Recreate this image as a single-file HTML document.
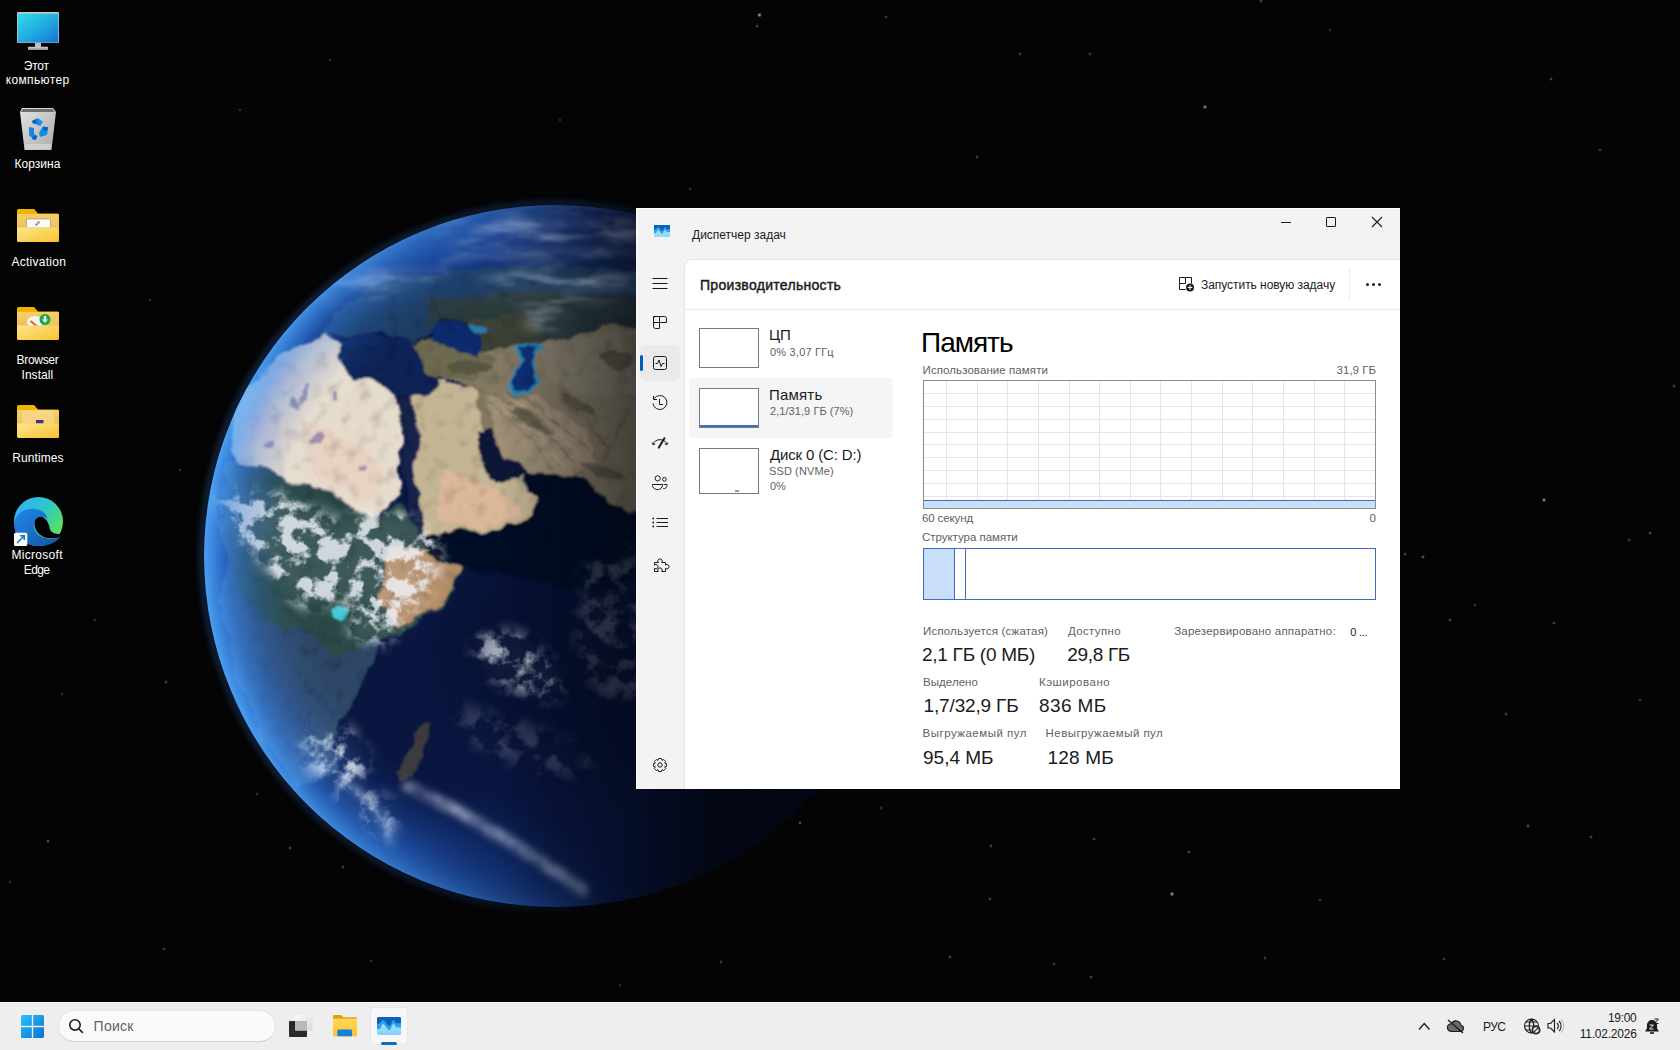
<!DOCTYPE html>
<html><head><meta charset="utf-8">
<style>
*{box-sizing:border-box;margin:0;padding:0}
html,body{width:1680px;height:1050px;overflow:hidden;background:#040404;font-family:"Liberation Sans",sans-serif;position:relative}
.b{position:absolute}
.tx{position:absolute;white-space:nowrap;line-height:1;z-index:5}

</style></head><body>
<svg class="b" style="left:0;top:0" width="1680" height="1050" viewBox="0 0 1680 1050"><defs><radialGradient id="st"><stop offset="0" stop-color="#fff"/><stop offset="0.35" stop-color="#fff" stop-opacity="0.6"/><stop offset="1" stop-color="#fff" stop-opacity="0"/></radialGradient></defs><g fill="url(#st)">
<circle cx="759.5" cy="15" r="2.4" opacity="0.75"/>
<circle cx="757" cy="26" r="2.0" opacity="0.38"/>
<circle cx="1205" cy="107" r="2.3" opacity="0.68"/>
<circle cx="1551" cy="79" r="2.0" opacity="0.38"/>
<circle cx="1020" cy="54" r="2.0" opacity="0.34"/>
<circle cx="1090" cy="54" r="2.0" opacity="0.34"/>
<circle cx="977" cy="157" r="2.0" opacity="0.34"/>
<circle cx="690" cy="189" r="1.9" opacity="0.30"/>
<circle cx="886" cy="17" r="2.0" opacity="0.34"/>
<circle cx="1261" cy="1" r="2.0" opacity="0.38"/>
<circle cx="1172" cy="894" r="2.4" opacity="0.75"/>
<circle cx="1528" cy="826" r="2.1" opacity="0.45"/>
<circle cx="1591" cy="837" r="2.0" opacity="0.41"/>
<circle cx="991" cy="846" r="2.0" opacity="0.38"/>
<circle cx="1094" cy="839" r="2.0" opacity="0.38"/>
<circle cx="1189" cy="852" r="2.0" opacity="0.41"/>
<circle cx="990" cy="899" r="2.0" opacity="0.38"/>
<circle cx="950" cy="957" r="2.0" opacity="0.38"/>
<circle cx="1091" cy="977" r="2.0" opacity="0.41"/>
<circle cx="1054" cy="964" r="2.0" opacity="0.34"/>
<circle cx="1444" cy="959" r="2.0" opacity="0.34"/>
<circle cx="881" cy="808" r="1.9" opacity="0.30"/>
<circle cx="1544" cy="500" r="2.3" opacity="0.68"/>
<circle cx="1423" cy="557" r="2.1" opacity="0.45"/>
<circle cx="1405" cy="554" r="2.0" opacity="0.38"/>
<circle cx="1450" cy="620" r="2.0" opacity="0.41"/>
<circle cx="1554" cy="623" r="2.0" opacity="0.38"/>
<circle cx="1674" cy="386" r="2.0" opacity="0.38"/>
<circle cx="1506" cy="714" r="2.0" opacity="0.38"/>
<circle cx="1629" cy="540" r="2.0" opacity="0.34"/>
<circle cx="48" cy="841" r="2.1" opacity="0.45"/>
<circle cx="166" cy="682" r="2.0" opacity="0.38"/>
<circle cx="290" cy="848" r="2.0" opacity="0.38"/>
<circle cx="343" cy="867" r="2.0" opacity="0.34"/>
<circle cx="164" cy="949" r="2.0" opacity="0.34"/>
<circle cx="721" cy="962" r="2.0" opacity="0.34"/>
<circle cx="371" cy="961" r="1.9" opacity="0.30"/>
<circle cx="10" cy="882" r="1.9" opacity="0.30"/>
<circle cx="62" cy="694" r="1.9" opacity="0.30"/>
<circle cx="257" cy="794" r="1.9" opacity="0.30"/>
<circle cx="800" cy="823" r="2.1" opacity="0.45"/>
<circle cx="1382" cy="787" r="2.0" opacity="0.38"/>
<circle cx="1650" cy="533" r="2.0" opacity="0.41"/>
<circle cx="1475" cy="605" r="1.9" opacity="0.30"/>
<circle cx="1265" cy="958" r="2.0" opacity="0.34"/>
<circle cx="150" cy="300" r="1.9" opacity="0.30"/>
<circle cx="240" cy="110" r="1.9" opacity="0.26"/>
<circle cx="330" cy="60" r="1.9" opacity="0.26"/>
<circle cx="560" cy="120" r="1.9" opacity="0.26"/>
<circle cx="95" cy="620" r="1.9" opacity="0.26"/>
<circle cx="180" cy="470" r="1.9" opacity="0.26"/>
<circle cx="1330" cy="30" r="1.9" opacity="0.30"/>
<circle cx="1600" cy="150" r="1.9" opacity="0.30"/>
<circle cx="1640" cy="700" r="1.9" opacity="0.30"/>
<circle cx="1320" cy="900" r="1.9" opacity="0.30"/>
<circle cx="620" cy="985" r="1.9" opacity="0.26"/>
</g></svg>
<svg class="b" style="left:0;top:0" width="1680" height="1050" viewBox="0 0 1680 1050">
<defs>
 <clipPath id="ec"><circle cx="555" cy="556" r="351"/></clipPath>
 <filter id="bl1" x="-20%" y="-20%" width="140%" height="140%"><feGaussianBlur stdDeviation="1.2"/></filter>
 <filter id="bl2" x="-20%" y="-20%" width="140%" height="140%"><feGaussianBlur stdDeviation="3"/></filter>
 <filter id="bl3" x="-30%" y="-30%" width="160%" height="160%"><feGaussianBlur stdDeviation="7"/></filter>
 <filter id="bl4" x="-50%" y="-50%" width="200%" height="200%"><feGaussianBlur stdDeviation="16"/></filter>
 <filter id="land" x="0" y="0" width="1680" height="1050" filterUnits="userSpaceOnUse">
  <feTurbulence type="fractalNoise" baseFrequency="0.022" numOctaves="3" seed="3" result="t"/>
  <feDisplacementMap in="SourceGraphic" in2="t" scale="20" xChannelSelector="R" yChannelSelector="G" result="d0"/>
  <feTurbulence type="fractalNoise" baseFrequency="0.09" numOctaves="2" seed="5" result="tt"/>
  <feDisplacementMap in="d0" in2="tt" scale="6" xChannelSelector="R" yChannelSelector="G" result="d"/>
  <feTurbulence type="fractalNoise" baseFrequency="0.07" numOctaves="4" seed="9" result="t2"/>
  <feColorMatrix in="t2" type="matrix" values="0.8 0 0 0 0.6  0.8 0 0 0 0.6  0.8 0 0 0 0.6  0 0 0 0 1" result="g"/>
  <feComposite in="d" in2="g" operator="arithmetic" k1="1" k2="0" k3="0" k4="0" result="m"/>
  <feGaussianBlur in="m" stdDeviation="0.9"/>
 </filter>
 <filter id="cloud" x="0" y="0" width="1680" height="1050" filterUnits="userSpaceOnUse">
  <feTurbulence type="fractalNoise" baseFrequency="0.05" numOctaves="4" seed="11" result="n"/>
  <feColorMatrix in="n" type="matrix" values="0 0 0 0 1  0 0 0 0 1  0 0 0 0 1  4.5 0 0 0 -2.05" result="c"/>
  <feGaussianBlur in="SourceGraphic" stdDeviation="8" result="m"/>
  <feComposite in="c" in2="m" operator="arithmetic" k1="1.5" k2="0" k3="0.12" k4="0" result="o"/>
  <feColorMatrix in="o" type="matrix" values="0 0 0 0 0.9  0 0 0 0 0.93  0 0 0 0 0.98  0 0 0 1 0"/>
 </filter>
 <filter id="haze" x="0" y="0" width="1680" height="1050" filterUnits="userSpaceOnUse">
  <feTurbulence type="fractalNoise" baseFrequency="0.018 0.07" numOctaves="4" seed="21" result="n"/>
  <feColorMatrix in="n" type="matrix" values="0 0 0 0 1  0 0 0 0 1  0 0 0 0 1  3.0 0 0 0 -1.3" result="c"/>
  <feGaussianBlur in="c" stdDeviation="1" result="cb"/>
  <feGaussianBlur in="SourceGraphic" stdDeviation="9" result="m"/>
  <feComposite in="cb" in2="m" operator="arithmetic" k1="1.3" k2="0" k3="0.18" k4="0" result="o"/>
  <feColorMatrix in="o" type="matrix" values="0 0 0 0 0.78  0 0 0 0 0.85  0 0 0 0 0.98  0 0 0 0.9 0"/>
 </filter>
 <filter id="streak" x="0" y="0" width="1680" height="1050" filterUnits="userSpaceOnUse">
  <feTurbulence type="fractalNoise" baseFrequency="0.025" numOctaves="3" seed="4" result="n"/>
  <feColorMatrix in="n" type="matrix" values="0 0 0 0 1  0 0 0 0 1  0 0 0 0 1  1.4 0 0 0 0" result="c"/>
  <feGaussianBlur in="SourceGraphic" stdDeviation="3.5" result="m"/>
  <feComposite in="c" in2="m" operator="arithmetic" k1="0.8" k2="0" k3="0" k4="0" result="o"/>
  <feColorMatrix in="o" type="matrix" values="0 0 0 0 0.78  0 0 0 0 0.84  0 0 0 0 0.96  0 0 0 0.75 0"/>
 </filter>
 <radialGradient id="rim" cx="555" cy="556" r="351" gradientUnits="userSpaceOnUse">
  <stop offset="0.80" stop-color="#1d4fb0" stop-opacity="0"/>
  <stop offset="0.90" stop-color="#1d4fb0" stop-opacity="0.3"/>
  <stop offset="0.96" stop-color="#1f56b8" stop-opacity="0.6"/>
  <stop offset="1" stop-color="#2a68c8" stop-opacity="0.75"/>
 </radialGradient>
 <radialGradient id="darkoc"><stop offset="0" stop-color="#060f30" stop-opacity="0.95"/><stop offset="0.6" stop-color="#060f30" stop-opacity="0.7"/><stop offset="1" stop-color="#060f30" stop-opacity="0"/></radialGradient>
 <radialGradient id="lightoc"><stop offset="0" stop-color="#163c8c" stop-opacity="0.45"/><stop offset="1" stop-color="#163c8c" stop-opacity="0"/></radialGradient>
 <radialGradient id="lightoc2"><stop offset="0" stop-color="#173f94" stop-opacity="0.8"/><stop offset="1" stop-color="#1e4898" stop-opacity="0"/></radialGradient>
 <linearGradient id="litg" x1="260" y1="0" x2="640" y2="0" gradientUnits="userSpaceOnUse">
  <stop offset="0" stop-color="#fff"/>
  <stop offset="1" stop-color="#000"/>
 </linearGradient>
 <mask id="lit" maskUnits="userSpaceOnUse" x="0" y="0" width="1680" height="1050"><rect x="0" y="0" width="1680" height="1050" fill="url(#litg)"/></mask>
 <linearGradient id="shade" x1="500" y1="540" x2="780" y2="540" gradientUnits="userSpaceOnUse">
  <stop offset="0" stop-color="#02040c" stop-opacity="0"/>
  <stop offset="0.4" stop-color="#02040c" stop-opacity="0.4"/>
  <stop offset="0.75" stop-color="#02040c" stop-opacity="0.8"/>
  <stop offset="1" stop-color="#03050e" stop-opacity="0.9"/>
 </linearGradient>
 <linearGradient id="glowg" x1="200" y1="500" x2="700" y2="600" gradientUnits="userSpaceOnUse">
  <stop offset="0" stop-color="#3a80e0" stop-opacity="1"/>
  <stop offset="0.6" stop-color="#3478dc" stop-opacity="0.7"/>
  <stop offset="1" stop-color="#2a6fd6" stop-opacity="0"/>
 </linearGradient>
</defs>
<g clip-path="url(#ec)">
 <rect x="200" y="200" width="720" height="720" fill="#091640"/>
 
 <ellipse cx="400" cy="850" rx="170" ry="70" fill="url(#lightoc)"/>
 <ellipse cx="440" cy="250" rx="250" ry="75" fill="url(#lightoc2)"/>
 <ellipse cx="600" cy="650" rx="190" ry="160" fill="url(#darkoc)"/>
 <g filter="url(#land)">
  <!-- Europe / Russia -->
  <path d="M320 334 L340 310 L366 290 L400 275 L460 268 L520 265 L600 268 L680 275 L700 300 L700 345 L600 332 L548 338 L520 344 L488 334 L470 322 L440 320 L425 338 L405 344 L380 330 L352 334Z" fill="#1c3a60"/>
  <path d="M425 300 L520 292 L600 295 L700 300 L700 345 L600 332 L548 338 L520 344 L488 334 L470 322 L440 320 L425 330Z" fill="#2c3a3c"/>
  <!-- Central Asia / Iran / Turkey -->
  <path d="M405 346 L428 343 L446 346 L462 354 L484 352 L506 346 L546 338 L600 328 L660 325 L700 335 L700 530 L640 512 L608 498 L594 488 L559 478 L526 471 L502 466 L492 452 L484 430 L474 392 L455 382 L430 378 L410 372Z" fill="#847a64"/>
  <path d="M486 395 L540 400 L585 430 L598 470 L570 480 L528 470 L500 455Z" fill="#a09078"/>
  <path d="M540 340 L620 335 L640 390 L580 395 L548 380Z" fill="#8a8270"/>
  <!-- Sahara -->
  <path d="M232 460 L236 410 L262 378 L279 357 L297 345 L324 335 L344 340 L339 355 L346 372 L354 384 L369 379 L383 389 L400 399 L400 430 L400 498 L372 520 L346 512 L321 492 L284 475 L232 462Z" fill="#e6dccc"/>
  <path d="M300 420 L360 440 L390 480 L360 505 L320 480Z" fill="#e8d2c2"/>
  <!-- Arabia -->
  <path d="M412 380 L444 382 L474 390 L484 430 L496 458 L524 472 L540 498 L522 518 L484 530 L447 537 L420 540 L415 470Z" fill="#c4b594"/>
  <path d="M440 470 L500 490 L520 510 L470 530 L440 520Z" fill="#dcb89a"/>
  <!-- Sahel / Congo -->
  <path d="M225 462 L284 476 L321 493 L346 513 L372 521 L402 505 L420 542 L466 557 L455 590 L420 622 L385 640 L365 675 L345 720 L330 765 L300 775 L260 740 L238 680 L222 600Z" fill="#2e4666"/>
  <path d="M225 462 L284 476 L321 493 L346 513 L372 521 L402 505 L420 542 L466 557 L455 590 L420 622 L385 640 L340 650 L290 640 L240 600 L222 540Z" fill="#2c4a46"/>
  <!-- Horn -->
  <path d="M392 548 L430 552 L467 556 L452 590 L420 616 L396 630 L380 600Z" fill="#b48e6a"/>
  <!-- southern africa -->
  <path d="M246 640 L300 630 L352 660 L342 720 L332 770 L300 782 L268 742 L250 690Z" fill="#2e4668"/>
  <!-- Madagascar -->
  <path d="M431 718 L422 729 L405 751 L394 774 L399 787 L416 774 L428 751 L433 730Z" fill="#3c3a3e"/>
  <path d="M462 318 L525 314 L548 336 L506 348 L484 354 L478 334Z" fill="#3a4236"/>
  <path d="M400 346 L430 340 L462 352 L484 354 L500 360 L470 380 L430 378 L408 370Z" fill="#6e6a50"/>
  <!-- seas -->
  <path d="M339 338 L352 336 L368 332 L386 338 L403 335 L425 360 L433 376 L440 382 L433 399 L412 400 L398 399 L383 389 L369 379 L354 384 L346 372 L339 355Z" fill="#0d2054"/>
  <path d="M427 332 L440 323 L455 321 L470 327 L482 335 L484 350 L477 357 L462 353 L445 345 L430 343Z" fill="#10296c"/>
  <path d="M470 324 L487 323 L488 330 L472 330Z" fill="#2a7ab0"/>
  <path d="M514 347 L524 341 L541 340 L546 345 L537 351 L532 360 L534 374 L537 387 L529 398 L517 394 L507 384 L512 372 L517 360Z" fill="#2a8ab8"/>
  <path d="M517 348 L526 344 L538 343 L534 351 L529 361 L531 374 L533 386 L527 394 L519 391 L511 383 L515 371 L519 359Z" fill="#10307a"/>
  <path d="M400 402 L410 401 L417 470 L423 538 L415 540 L404 470Z" fill="#13224c"/>
  <path d="M478 430 L494 433 L498 449 L506 460 L522 463 L530 471 L522 481 L498 482 L486 474 L480 456Z" fill="#0a1638"/>
  <path d="M420 536 L482 530 L519 518 L539 498 L526 471 L559 478 L593 488 L608 498 L636 511 L680 525 L690 560 L600 590 L520 580 L470 570 L430 556Z" fill="#060d26"/>
  <g fill="#8478a0" opacity="0.75">
   <ellipse cx="300" cy="392" rx="4" ry="13" transform="rotate(15 300 392)"/>
   <ellipse cx="292" cy="402" rx="3" ry="8" transform="rotate(-20 292 402)"/>
   <ellipse cx="316" cy="438" rx="9" ry="4" transform="rotate(-35 316 438)"/>
   <ellipse cx="334" cy="398" rx="3" ry="5"/>
   <ellipse cx="268" cy="442" rx="5" ry="3" transform="rotate(-30 268 442)"/>
   <ellipse cx="360" cy="470" rx="6" ry="3" transform="rotate(-20 360 470)"/>
  </g>
  <g fill="#e8d0cc" opacity="0.6">
   <ellipse cx="280" cy="375" rx="22" ry="12"/>
   <ellipse cx="265" cy="420" rx="14" ry="20"/>
  </g>
  <ellipse cx="340" cy="609" rx="8" ry="7" fill="#45c8d8"/>
  <g fill="#4a4638" opacity="0.6">
   <ellipse cx="530" cy="420" rx="22" ry="8" transform="rotate(25 530 420)"/>
   <ellipse cx="580" cy="405" rx="18" ry="6" transform="rotate(30 580 405)"/>
   <ellipse cx="600" cy="472" rx="20" ry="6" transform="rotate(15 600 472)"/>
   <ellipse cx="470" cy="366" rx="20" ry="6"/>
   <ellipse cx="615" cy="360" rx="16" ry="7"/>
  </g>
  <g fill="none" stroke="#4e4536" stroke-width="1.6" opacity="0.45">
   <path d="M486 398 Q520 428 556 470"/>
   <path d="M496 392 Q532 418 572 462"/>
   <path d="M508 390 Q548 410 588 452"/>
   <path d="M468 384 Q495 396 516 416"/>
   <path d="M560 400 Q590 420 612 450"/>
   <path d="M600 470 Q615 440 630 410"/>
  </g>
  <g fill="none" stroke="#c8b898" stroke-width="1.3" opacity="0.6">
   <path d="M491 396 Q526 424 564 466"/>
   <path d="M502 391 Q540 414 580 457"/>
  </g>
  <g fill="#a89a7e" opacity="0.5">
   <ellipse cx="540" cy="450" rx="18" ry="8" transform="rotate(20 540 450)"/>
  </g>
 </g>
 <!-- soft haze clouds top -->
 <g filter="url(#haze)">
  <path d="M430 228 L520 212 L620 214 L660 238 L630 262 L540 256 L470 258Z" fill="#fff" opacity="0.35"/>
  <path d="M300 285 L380 268 L440 272 L410 290 L340 298Z" fill="#fff" opacity="0.5"/>
  <path d="M480 282 L560 275 L640 282 L610 298 L530 300Z" fill="#fff" opacity="0.7"/>
  <path d="M520 318 L560 312 L575 322 L540 328Z" fill="#fff" opacity="0.8"/>
 </g>
 <!-- clouds -->
 <g filter="url(#cloud)" opacity="0.82">
  <path d="M215 490 L280 495 L330 520 L360 560 L340 600 L300 605 L265 560 L225 530Z" fill="#fff"/>
  <path d="M340 520 L400 515 L440 540 L430 590 L390 640 L355 640 L350 600Z" fill="#fff"/>
  <path d="M478 632 L520 634 L562 672 L556 700 L510 690 L476 660Z" fill="#fff" opacity="0.5"/>
  <path d="M585 560 L640 550 L660 700 L600 700 L575 640Z" fill="#fff" opacity="0.18"/>
  <path d="M300 730 L350 730 L370 770 L340 790 L305 770Z" fill="#fff" opacity="0.7"/>
  <path d="M330 775 L395 805 L390 840 L350 815Z" fill="#fff" opacity="0.6"/>
  <path d="M440 700 L520 720 L600 760 L560 780 L480 750Z" fill="#fff" opacity="0.14"/>
 </g>
 <g filter="url(#streak)" opacity="0.7">
  <path d="M470 232 C520 222 580 220 640 226" stroke="#fff" stroke-width="6" fill="none"/>
  <path d="M440 262 C500 250 560 248 640 254" stroke="#fff" stroke-width="5" fill="none" opacity="0.6"/>
  <path d="M330 282 C370 270 410 268 450 272" stroke="#fff" stroke-width="5" fill="none" opacity="0.6"/>
  <path d="M560 292 C590 286 620 286 645 290" stroke="#fff" stroke-width="5" fill="none" opacity="0.7"/>
 </g>
 <g filter="url(#streak)">
  <path d="M408 786 C450 805 520 845 582 890" stroke="#fff" stroke-width="12" fill="none" stroke-linecap="round"/>
  <path d="M340 778 C360 790 385 815 392 842" stroke="#fff" stroke-width="9" fill="none" stroke-linecap="round" opacity="0.6"/>
 </g>
 
 <rect x="200" y="200" width="720" height="720" fill="url(#rim)" mask="url(#lit)"/>
 <rect x="200" y="200" width="720" height="720" fill="url(#shade)"/>
</g>
<circle cx="555" cy="556" r="353" fill="none" stroke="url(#glowg)" stroke-width="3" filter="url(#bl2)" opacity="0.55"/>
</svg>
<div class="b" style="left:204px;top:205px;width:702px;height:702px;border-radius:50%;background:radial-gradient(circle 351px at 351px 351px, rgba(30,90,200,0) 74%, rgba(30,90,200,.25) 86%, rgba(34,96,206,.55) 93%, rgba(45,110,215,.85) 98%, rgba(50,118,220,.9) 100%);-webkit-mask-image:linear-gradient(to right,#000 40px,rgba(0,0,0,0) 400px);mask-image:linear-gradient(to right,#000 40px,rgba(0,0,0,0) 400px);mix-blend-mode:screen"></div>

<!-- This PC -->
<svg class="b" style="left:17px;top:11px" width="43" height="40" viewBox="0 0 43 40">
 <defs><linearGradient id="mon" x1="0" y1="0" x2="1" y2="1"><stop offset="0" stop-color="#33e0e6"/><stop offset="0.55" stop-color="#20a8e0"/><stop offset="1" stop-color="#1670d6"/></linearGradient>
 <linearGradient id="stand" x1="0" y1="0" x2="0" y2="1"><stop offset="0" stop-color="#d6d6d6"/><stop offset="1" stop-color="#8a8a8a"/></linearGradient></defs>
 <rect x="0" y="1" width="42" height="31" rx="1" fill="#c8c8c8"/>
 <rect x="0.7" y="2.6" width="40.6" height="29" fill="url(#mon)"/>
 <rect x="18" y="32" width="6" height="4" fill="#bdbdbd"/>
 <rect x="11" y="35.8" width="20" height="3.2" rx="0.6" fill="url(#stand)"/>
</svg>
<!-- Recycle bin -->
<svg class="b" style="left:19px;top:107px" width="38" height="44" viewBox="0 0 38 44">
 <defs><linearGradient id="bin" x1="0" y1="0" x2="1" y2="1"><stop offset="0" stop-color="#e4e4e4"/><stop offset="1" stop-color="#a9a9ab"/></linearGradient></defs>
 <path d="M1 5 L3 1 H34 L37 5 L32.5 43 H5.5Z" fill="url(#bin)"/>
 <path d="M3.5 2 H33.5 L35.5 5 H1.8Z" fill="#6e6e70"/>
 <rect x="6" y="37" width="26" height="5.5" fill="#d6d6d8" opacity="0.8"/>
 <g fill="#1a8ee8">
  <path d="M13 14 L19 11 L24 15 L21 19 L16 17Z"/>
  <path d="M24 19 L29 21 L28 28 L21 30 L20 26Z" fill="#168ae6"/>
  <path d="M10 20 L15 21 L15 27 L19 29 L15 33 L10 28Z" fill="#1b84e0"/>
  <path d="M13 14 L17 12 L18 16 L14 17Z" fill="#0d60c0"/>
  <path d="M25 20 L29 20 L28 24 L24 23Z" fill="#0d60c0"/>
  <path d="M14 29 L18 29 L17 33 L13 32Z" fill="#0d60c0"/>
 </g>
</svg>
<!-- Activation folder -->
<svg class="b" style="left:17px;top:208px" width="43" height="35" viewBox="0 0 43 35">
 <defs>
  <linearGradient id="ff" x1="0" y1="0" x2="1" y2="1"><stop offset="0" stop-color="#fde58a"/><stop offset="1" stop-color="#f8c332"/></linearGradient>
  <linearGradient id="fb" x1="0" y1="0" x2="0" y2="1"><stop offset="0" stop-color="#f6cf6a"/><stop offset="1" stop-color="#eec15a"/></linearGradient>
 </defs>
 <path d="M0 2.5 Q0 1 1.5 1 H17 L21 5.5 H40.5 Q42 5.5 42 7 V20 H0Z" fill="#f0b400"/>
 <path d="M0 6 H42 V20 H0Z" fill="url(#fb)"/>
 <rect x="9.5" y="11" width="24" height="9" fill="#fafafa" stroke="#9a8a6a" stroke-width="0.6"/>
 <path d="M21 13 L23 14 L22 16 L20 15Z M19 15 L21 16 L20 18 L18 17Z" fill="#8a8a8a"/>
 <path d="M0 19.5 H42 V32.5 Q42 34 40.5 34 H1.5 Q0 34 0 32.5Z" fill="url(#ff)"/>
</svg>
<!-- Browser Install folder -->
<svg class="b" style="left:17px;top:306px" width="43" height="35" viewBox="0 0 43 35">
 <path d="M0 2.5 Q0 1 1.5 1 H17 L21 5.5 H40.5 Q42 5.5 42 7 V20 H0Z" fill="#f0b400"/>
 <path d="M0 6 H42 V20 H0Z" fill="url(#fb)"/>
 <ellipse cx="18" cy="16" rx="8" ry="6" fill="#f8f4f0"/>
 <path d="M13.5 15 L21 21" stroke="#e06a20" stroke-width="2.2"/>
 <circle cx="28" cy="13.5" r="5.5" fill="#1aa84a"/>
 <path d="M26.8 10 H29.2 V13.5 H31 L28 17 L25 13.5 H26.8Z" fill="#e8fff0"/>
 <path d="M0 19.5 H42 V32.5 Q42 34 40.5 34 H1.5 Q0 34 0 32.5Z" fill="url(#ff)"/>
</svg>
<!-- Runtimes folder -->
<svg class="b" style="left:17px;top:404px" width="43" height="35" viewBox="0 0 43 35">
 <path d="M0 2.5 Q0 1 1.5 1 H17 L21 5.5 H40.5 Q42 5.5 42 7 V20 H0Z" fill="#f0b400"/>
 <path d="M0 6 H42 V20 H0Z" fill="url(#fb)"/>
 <path d="M5 6 H37 V20 H5Z" fill="#f8dc98" opacity="0.6"/>
 <rect x="19" y="16" width="7.5" height="3.5" fill="#3a3a7a"/>
 <path d="M0 19.5 H42 V32.5 Q42 34 40.5 34 H1.5 Q0 34 0 32.5Z" fill="url(#ff)"/>
</svg>
<!-- Edge -->
<svg class="b" style="left:14px;top:497px" width="49" height="49" viewBox="0 0 48 48">
 <defs>
  <linearGradient id="eg1" x1="0.1" y1="0.1" x2="0.95" y2="0.7"><stop offset="0" stop-color="#2fb6f4"/><stop offset="0.5" stop-color="#2ec6c8"/><stop offset="1" stop-color="#5ee35a"/></linearGradient>
  <linearGradient id="eg2" x1="0" y1="0" x2="1" y2="1"><stop offset="0" stop-color="#1f8ae6"/><stop offset="1" stop-color="#1650a8"/></linearGradient>
 </defs>
 <circle cx="24" cy="24" r="24" fill="url(#eg1)"/>
 <path d="M0.2 27 C1 15 12 10 22 12 C28 13 32 17 33 22 C29 18 21 19 19.5 26 C18 34 26 41 36 41 C40 41 43 40 46 38.5 C42 45 33 48 24 48 C11 48 0 40 0.2 27Z" fill="url(#eg2)"/>
 <path d="M20 26 C20 20 26 18 30 21 C33 23 34 27 35 30 C35 33 37 35 42 36 C44 36.5 46 37 47 36.5 C45 39 42 40.5 36 40.5 C27 40.5 20 34 20 26Z" fill="#000"/>
 <rect x="0" y="35" width="13" height="13" rx="1.5" fill="#fbfbfb"/>
 <path d="M3 45 L10 38 M6 38 H10 V42" stroke="#1f6fd0" stroke-width="1.5" fill="none"/>
</svg>

<div class="b" style="left:636px;top:208px;width:764px;height:581px;background:#f3f3f3;border-top:1px solid #fdfdfd;border-left:1px solid #fdfdfd"></div>
<!-- app icon -->
<svg class="b" style="left:654px;top:225px" width="16" height="12" viewBox="0 0 24 18">
 <rect width="24" height="18" rx="1" fill="#9ad8fa"/>
 <path d="M0 0H24V10.5H19.5C18.5 10.5 18 7.1 16.5 7.1C15 7.1 14 13.2 12.3 13.2C10.6 13.2 7.6 7.1 6.1 7.1C4.6 7.1 4 11.9 3 11.9H0Z" fill="#2ba2ea"/>
 <path d="M0 0H24V6.3H19C18 6.3 17.8 3.1 16.5 3.1C15 3.1 14 8.9 12.3 8.9C10.6 8.9 7.6 3.1 6.1 3.1C4.6 3.1 3.5 6.8 2 6.8H0Z" fill="#0b62b8"/>
</svg>
<!-- caption buttons -->
<div class="b" style="left:1281px;top:222px;width:10px;height:1px;background:#1b1b1b"></div>
<div class="b" style="left:1326px;top:217px;width:10px;height:10px;border:1px solid #1b1b1b;border-radius:1px"></div>
<svg class="b" style="left:1371px;top:216px" width="12" height="12" viewBox="0 0 12 12"><path d="M1 1L11 11M11 1L1 11" stroke="#1b1b1b" stroke-width="1.1"/></svg>
<!-- panel -->
<div class="b" style="left:684px;top:259px;width:716px;height:530px;background:#fff;border-top:1px solid #e5e5e5;border-left:1px solid #e5e5e5;border-top-left-radius:8px"></div>
<div class="b" style="left:685px;top:309px;width:715px;height:1px;background:#ebebeb"></div>
<div class="b" style="left:1349px;top:268px;width:1px;height:33px;background:#ededed"></div>
<!-- new task icon -->
<svg class="b" style="left:1178px;top:276px" width="17" height="16" viewBox="0 0 17 16">
 <path d="M1.5 1.5H7.5V7.5H1.5Z M7.5 1.5H13.5V7.5 M1.5 7.5V13.5H7.5" fill="none" stroke="#1b1b1b" stroke-width="1"/>
 <circle cx="12" cy="11.5" r="4" fill="#1b1b1b"/>
 <path d="M12 9.2V13.8M9.7 11.5H14.3" stroke="#fff" stroke-width="1.1"/>
</svg>
<!-- more dots -->
<div class="b" style="left:1366px;top:283px;width:3px;height:3px;border-radius:50%;background:#1b1b1b"></div>
<div class="b" style="left:1372px;top:283px;width:3px;height:3px;border-radius:50%;background:#1b1b1b"></div>
<div class="b" style="left:1378px;top:283px;width:3px;height:3px;border-radius:50%;background:#1b1b1b"></div>
<!-- nav -->
<div class="b" style="left:640px;top:345px;width:40px;height:36px;background:#eaeaea;border-radius:5px"></div>
<div class="b" style="left:640px;top:355px;width:3px;height:16px;background:#005fb8;border-radius:2px"></div>
<svg class="b" style="left:644px;top:268px" width="32" height="520" viewBox="644 268 32 520" fill="none" stroke="#1b1b1b" stroke-width="1">
 <!-- hamburger -->
 <path d="M652.5 278.5H667.5M652.5 283.5H667.5M652.5 288.5H667.5"/>
 <!-- apps -->
 <path d="M653.5 316.5H659.5V328.5H655.5Q653.5 328.5 653.5 326.5Z M659.5 316.5H664.5Q666.5 316.5 666.5 318.5V322.5H653.5 M653.5 318.5Q653.5 316.5 655.5 316.5"/>
 <!-- perf -->
 <rect x="653.5" y="356.5" width="13" height="13" rx="2"/>
 <path d="M655.5 363.5H657.5L659 360L661 366.5L662.5 363.5H664.5"/>
 <!-- history -->
 <path d="M654.2 398.5A7 7 0 1 1 653 403.5"/>
 <path d="M653.5 396V399.5H657"/>
 <path d="M659.5 399V404.5H663"/>
 <!-- speed -->
 <path d="M652.8 444.5A7.8 7.8 0 0 1 667.2 444.5"/>
 <path d="M652.3 442.5L653.2 444.8L655.3 443.8M667.7 442.5L666.8 444.8L664.7 443.8"/>
 <path d="M658.8 447.6L664.4 438.2" stroke-width="2" stroke-linecap="round"/>
 <!-- people -->
 <circle cx="657.7" cy="478.4" r="2.6"/>
 <circle cx="664.4" cy="479.3" r="1.9"/>
 <path d="M652.5 484.5H662.5V485.3A5 4.3 0 0 1 652.5 485.3Z"/>
 <path d="M663.5 484.5H667V485.5A3.2 3.2 0 0 1 663.3 488.6"/>
 <!-- list -->
 <path d="M656.5 518.5H668M656.5 522.5H668M656.5 526.5H668"/>
 <circle cx="653.3" cy="518.5" r="0.9" fill="#1b1b1b" stroke="none"/>
 <circle cx="653.3" cy="522.5" r="0.9" fill="#1b1b1b" stroke="none"/>
 <circle cx="653.3" cy="526.5" r="0.9" fill="#1b1b1b" stroke="none"/>
 <!-- puzzle -->
 <path d="M654.5 562.5H658.3A2.2 2.2 0 1 1 661.7 562.5H665.5V565A2.2 2.2 0 1 1 665.5 568.4V571.5H661.7A2.2 2.2 0 1 0 658.3 571.5H654.5V568.4A2.2 2.2 0 1 0 654.5 565Z" stroke-linejoin="round"/>
 <!-- gear -->
 <circle cx="660" cy="765" r="2.2"/>
 <path d="M658.6 758.5H661.4L662 760.3L663.8 759.5L665.6 761.4L664.7 763.1L666.5 763.7V766.3L664.7 766.9L665.6 768.6L663.8 770.5L662 769.7L661.4 771.5H658.6L658 769.7L656.2 770.5L654.4 768.6L655.3 766.9L653.5 766.3V763.7L655.3 763.1L654.4 761.4L656.2 759.5L658 760.3Z"/>
</svg>
<!-- list items -->
<div class="b" style="left:689px;top:378px;width:204px;height:60px;background:#f5f5f5;border-radius:4px"></div>
<div class="b" style="left:699px;top:328px;width:60px;height:40px;border:1px solid #7a7a7a;background:#fff"></div>
<div class="b" style="left:699px;top:388px;width:60px;height:40px;border:1px solid #7a7a7a;background:#fff"></div>
<div class="b" style="left:700px;top:425px;width:58px;height:2px;background:#3a6fc0"></div>
<div class="b" style="left:699px;top:448px;width:60px;height:46px;border:1px solid #7a7a7a;background:#fff"></div>
<div class="b" style="left:735px;top:490px;width:4px;height:2px;background:#a0a070"></div>
<!-- memory graph -->
<svg class="b" style="left:923px;top:380px" width="453" height="129" viewBox="0 0 453 129">
 <rect x="0" y="0" width="453" height="129" fill="#fff"/>
 <g stroke="#e5e5e5" stroke-width="1">
  <path d="M23.5 1V128M54.5 1V128M84.5 1V128M115.5 1V128M146.5 1V128M176.5 1V128M207.5 1V128M237.5 1V128M268.5 1V128M299.5 1V128M329.5 1V128M360.5 1V128M391.5 1V128M421.5 1V128"/>
  <path d="M1 13.5H452M1 26.5H452M1 39.5H452M1 52.5H452M1 64.5H452M1 77.5H452M1 90.5H452M1 103.5H452M1 116.5H452"/>
 </g>
 <rect x="1" y="120" width="451" height="8" fill="#c8dff7"/>
 <g stroke="#d9e5f3" stroke-width="1"><path d="M23.5 121V128M54.5 121V128M84.5 121V128M115.5 121V128M146.5 121V128M176.5 121V128M207.5 121V128M237.5 121V128M268.5 121V128M299.5 121V128M329.5 121V128M360.5 121V128M391.5 121V128M421.5 121V128"/></g>
 <path d="M1 120.5H452" stroke="#3a6fc0" stroke-width="1.2"/>
 <rect x="0.5" y="0.5" width="452" height="128" fill="none" stroke="#8c8c8c"/>
</svg>
<!-- structure bar -->
<svg class="b" style="left:923px;top:548px" width="453" height="52" viewBox="0 0 453 52">
 <rect x="1" y="1" width="31" height="50" fill="#c8dff7"/>
 <path d="M31.5 1V51M42.5 1V51" stroke="#3a6fc0" stroke-width="1"/>
 <rect x="0.5" y="0.5" width="452" height="51" fill="none" stroke="#3a6fc0"/>
</svg>

<div class="b" style="left:0;top:1002px;width:1680px;height:48px;background:#eeeeee;border-top:1px solid #f7f7f7"></div>
<!-- start -->
<svg class="b" style="left:21px;top:1015px" width="23" height="23" viewBox="0 0 23 23">
 <defs><linearGradient id="wl" x1="0" y1="0" x2="1" y2="1"><stop offset="0" stop-color="#28c2f6"/><stop offset="1" stop-color="#0c6fd1"/></linearGradient></defs>
 <path d="M0 1.5Q0 0 1.5 0H10.8V10.8H0Z M12.2 0H21.5Q23 0 23 1.5V10.8H12.2Z M0 12.2H10.8V23H1.5Q0 23 0 21.5Z M12.2 12.2H23V21.5Q23 23 21.5 23H12.2Z" fill="url(#wl)"/>
</svg>
<!-- search -->
<div class="b" style="left:58px;top:1010px;width:218px;height:32px;border-radius:16px;background:#fafafa;border:1px solid #e2e2e2;border-bottom-color:#d2d2d2"></div>
<svg class="b" style="left:66px;top:1016px" width="20" height="20" viewBox="66 1016 20 20" fill="none" stroke="#1b1b1b" stroke-width="1.6">
 <circle cx="75" cy="1024.9" r="5.2"/><path d="M78.8 1028.7L82.4 1032.4" stroke-linecap="round"/>
</svg>
<!-- task view -->
<svg class="b" style="left:288px;top:1014px" width="26" height="24" viewBox="288 1014 26 24">
 <defs><linearGradient id="tvl" x1="0" y1="0" x2="1" y2="1"><stop offset="0" stop-color="#fbfbfb"/><stop offset="1" stop-color="#d8d8d8"/></linearGradient></defs>
 <rect x="289" y="1021" width="18" height="16" rx="1" fill="#2a2a2a"/>
 <rect x="295" y="1015" width="17.5" height="15.5" rx="1" fill="url(#tvl)" opacity="0.95"/>
 <rect x="295" y="1021" width="12" height="9.5" fill="#b9b9b9"/>
</svg>
<!-- explorer -->
<svg class="b" style="left:332px;top:1014px" width="26" height="24" viewBox="332 1014 26 24">
 <defs><linearGradient id="exg" x1="0" y1="0" x2="0" y2="1"><stop offset="0" stop-color="#ffd75a"/><stop offset="1" stop-color="#f9c437"/></linearGradient></defs>
 <path d="M333 1016.3Q333 1015 334.3 1015H340.5Q341.8 1015 342.5 1016.2L343.2 1017.3H355.7Q357 1017.3 357 1018.6V1020H333Z" fill="#dca208"/>
 <path d="M333 1018.6H357V1036.3H333Z" fill="url(#exg)"/>
 <path d="M337.3 1031Q337.3 1029.6 338.7 1029.6H350.6Q352 1029.6 352 1031V1036.3H337.3Z" fill="#1a7fd4"/>
</svg>
<!-- task manager button -->
<div class="b" style="left:370px;top:1007px;width:38px;height:38px;border-radius:5px;background:#f7f7f7;border:1px solid #e8e8e8"></div>
<svg class="b" style="left:377px;top:1017px" width="24" height="18" viewBox="0 0 24 18">
 <defs><linearGradient id="tmg" x1="0" y1="0" x2="0" y2="1"><stop offset="0" stop-color="#b8ecfd"/><stop offset="1" stop-color="#86d0f8"/></linearGradient></defs>
 <rect width="24" height="18" rx="1.6" fill="url(#tmg)"/>
 <path d="M0 1.6Q0 0 1.6 0H22.4Q24 0 24 1.6V10.5H19.5C18.5 10.5 18 7.1 16.5 7.1C15 7.1 14 13.2 12.3 13.2C10.6 13.2 7.6 7.1 6.1 7.1C4.6 7.1 4 11.9 3 11.9H0Z" fill="#2ba2ea"/>
 <path d="M0 1.6Q0 0 1.6 0H22.4Q24 0 24 1.6V6.3H19C18 6.3 17.8 3.1 16.5 3.1C15 3.1 14 8.9 12.3 8.9C10.6 8.9 7.6 3.1 6.1 3.1C4.6 3.1 3.5 6.8 2 6.8H0Z" fill="#0b62b8"/>
</svg>
<div class="b" style="left:381px;top:1042px;width:16px;height:3px;border-radius:2px;background:#0f6cbd"></div>
<!-- tray -->
<svg class="b" style="left:1410px;top:1010px" width="260" height="34" viewBox="1410 1010 260 34" fill="none" stroke="#1b1b1b" stroke-width="1.1">
 <path d="M1419 1029.5L1424.2 1023.5L1429.5 1029.5" stroke-width="1.3"/>
 <!-- cloud -->
 <path d="M1451 1031.5H1460.5A3.2 3.2 0 0 0 1461 1025.2A5 5 0 0 0 1451.5 1023.8A3.8 3.8 0 0 0 1451 1031.5Z" fill="#6a6a6a" stroke="#1b1b1b"/>
 <path d="M1448 1020L1463 1033" stroke-width="1.3"/>
 <!-- globe -->
 <circle cx="1531.5" cy="1026" r="7"/>
 <path d="M1524.5 1026H1538.5M1531.5 1019C1528.5 1022 1528.5 1030 1531.5 1033M1531.5 1019C1534.5 1022 1534.5 1030 1531.5 1033M1526 1022H1537M1526 1030H1531"/>
 <circle cx="1536" cy="1030" r="4" fill="#eeeeee"/>
 <circle cx="1536" cy="1030" r="3.3"/>
 <path d="M1533.8 1032.2L1538.2 1027.8"/>
 <!-- speaker -->
 <path d="M1548 1023.5H1550.5L1554.5 1019.5V1032L1550.5 1028H1548Z"/>
 <path d="M1557 1023A4 4 0 0 1 1557 1029M1559 1021A7 7 0 0 1 1559 1031"/>
 <path d="M1561 1019.5A9 9 0 0 1 1561 1032.5" stroke="#bdbdbd"/>
 <!-- bell -->
 <path d="M1646 1031H1658L1656.5 1028.5V1025A4.5 4.5 0 0 0 1647.5 1025V1028.5Z" fill="#1b1b1b"/>
 <path d="M1650 1033H1654" stroke-width="1.6"/>
 <path d="M1649.5 1025H1653.5L1649.5 1029H1653.5" stroke="#eeeeee" stroke-width="1"/>
 <path d="M1654.5 1019H1658.5L1654.5 1023.5H1658.5" stroke-width="1"/>
</svg>

<div class="tx" style="top:228.85px;font-size:12px;color:#1b1b1b;left:692.00px;">Диспетчер задач</div>
<div class="tx" style="top:278.16px;font-size:14px;color:#1b1b1b;-webkit-text-stroke:0.45px #1b1b1b;letter-spacing:0.294px;left:700.00px;">Производительность</div>
<div class="tx" style="top:279.35px;font-size:12px;color:#1b1b1b;letter-spacing:-0.048px;left:1201.00px;">Запустить новую задачу</div>
<div class="tx" style="top:327.01px;font-size:15px;color:#1b1b1b;left:769.00px;">ЦП</div>
<div class="tx" style="top:346.69px;font-size:11px;color:#5f5f5f;letter-spacing:0.200px;left:770.00px;">0% 3,07 ГГц</div>
<div class="tx" style="top:387.01px;font-size:15px;color:#1b1b1b;letter-spacing:0.200px;left:769.00px;">Память</div>
<div class="tx" style="top:406.19px;font-size:11px;color:#5f5f5f;letter-spacing:0.067px;left:770.00px;">2,1/31,9 ГБ (7%)</div>
<div class="tx" style="top:446.51px;font-size:15px;color:#1b1b1b;letter-spacing:-0.154px;left:770.00px;">Диск 0 (C: D:)</div>
<div class="tx" style="top:466.19px;font-size:11px;color:#5f5f5f;letter-spacing:0.111px;left:769.00px;">SSD (NVMe)</div>
<div class="tx" style="top:481.29px;font-size:11px;color:#5f5f5f;left:770.00px;">0%</div>
<div class="tx" style="top:328.51px;font-size:28px;color:#000000;letter-spacing:-1.000px;left:921.00px;">Память</div>
<div class="tx" style="top:365.27px;font-size:11.5px;color:#5f5f5f;letter-spacing:0.079px;left:922.60px;">Использование памяти</div>
<div class="tx" style="top:365.27px;font-size:11.5px;color:#5f5f5f;right:304.04px;">31,9 ГБ</div>
<div class="tx" style="top:512.67px;font-size:11.5px;color:#5f5f5f;letter-spacing:-0.125px;left:922.00px;">60 секунд</div>
<div class="tx" style="top:512.67px;font-size:11.5px;color:#5f5f5f;right:303.99px;">0</div>
<div class="tx" style="top:531.67px;font-size:11.5px;color:#5f5f5f;letter-spacing:-0.027px;left:922.00px;">Структура памяти</div>
<div class="tx" style="top:626.47px;font-size:11.5px;color:#5f5f5f;letter-spacing:0.180px;left:923.00px;">Используется (сжатая)</div>
<div class="tx" style="top:626.47px;font-size:11.5px;color:#5f5f5f;letter-spacing:0.343px;left:1068.00px;">Доступно</div>
<div class="tx" style="top:626.27px;font-size:11.5px;color:#5f5f5f;letter-spacing:0.200px;left:1174.20px;">Зарезервировано аппаратно:</div>
<div class="tx" style="top:626.69px;font-size:11px;color:#1b1b1b;letter-spacing:-0.250px;left:1350.30px;">0 ...</div>
<div class="tx" style="top:645.23px;font-size:19px;color:#1b1b1b;letter-spacing:-0.267px;left:922.00px;">2,1 ГБ (0 МБ)</div>
<div class="tx" style="top:645.23px;font-size:19px;color:#1b1b1b;letter-spacing:-0.333px;left:1067.30px;">29,8 ГБ</div>
<div class="tx" style="top:677.07px;font-size:11.5px;color:#5f5f5f;letter-spacing:0.057px;left:923.00px;">Выделено</div>
<div class="tx" style="top:677.07px;font-size:11.5px;color:#5f5f5f;letter-spacing:0.500px;left:1039.00px;">Кэшировано</div>
<div class="tx" style="top:695.93px;font-size:19px;color:#1b1b1b;letter-spacing:-0.160px;left:923.60px;">1,7/32,9 ГБ</div>
<div class="tx" style="top:695.93px;font-size:19px;color:#1b1b1b;letter-spacing:0.400px;left:1039.00px;">836 МБ</div>
<div class="tx" style="top:728.07px;font-size:11.5px;color:#5f5f5f;letter-spacing:0.500px;left:922.50px;">Выгружаемый пул</div>
<div class="tx" style="top:728.07px;font-size:11.5px;color:#5f5f5f;letter-spacing:0.438px;left:1045.60px;">Невыгружаемый пул</div>
<div class="tx" style="top:747.53px;font-size:19px;color:#1b1b1b;left:923.00px;">95,4 МБ</div>
<div class="tx" style="top:747.53px;font-size:19px;color:#1b1b1b;letter-spacing:0.200px;left:1047.40px;">128 МБ</div>
<div class="tx" style="top:1019.06px;font-size:14px;color:#5f5f5f;letter-spacing:0.250px;left:93.60px;">Поиск</div>
<div class="tx" style="top:1020.65px;font-size:12px;color:#1b1b1b;letter-spacing:-0.500px;left:1483.00px;">РУС</div>
<div class="tx" style="top:1011.85px;font-size:12px;color:#1b1b1b;letter-spacing:-0.325px;right:43.59px;">19:00</div>
<div class="tx" style="top:1027.85px;font-size:12px;color:#1b1b1b;letter-spacing:-0.222px;right:43.35px;">11.02.2026</div>
<div class="tx" style="top:59.95px;font-size:12px;color:#ffffff;letter-spacing:-0.267px;left:23.80px;">Этот</div>
<div class="tx" style="top:74.25px;font-size:12px;color:#ffffff;letter-spacing:0.375px;left:5.70px;">компьютер</div>
<div class="tx" style="top:157.85px;font-size:12px;color:#ffffff;left:14.60px;">Корзина</div>
<div class="tx" style="top:255.55px;font-size:12px;color:#ffffff;letter-spacing:0.267px;left:11.40px;">Activation</div>
<div class="tx" style="top:353.65px;font-size:12px;color:#ffffff;letter-spacing:-0.300px;left:16.50px;">Browser</div>
<div class="tx" style="top:368.85px;font-size:12px;color:#ffffff;letter-spacing:0.050px;left:21.50px;">Install</div>
<div class="tx" style="top:451.85px;font-size:12px;color:#ffffff;letter-spacing:0.086px;left:12.30px;">Runtimes</div>
<div class="tx" style="top:549.35px;font-size:12px;color:#ffffff;letter-spacing:0.312px;left:11.40px;">Microsoft</div>
<div class="tx" style="top:564.25px;font-size:12px;color:#ffffff;letter-spacing:-0.633px;left:23.80px;">Edge</div>
</body></html>
